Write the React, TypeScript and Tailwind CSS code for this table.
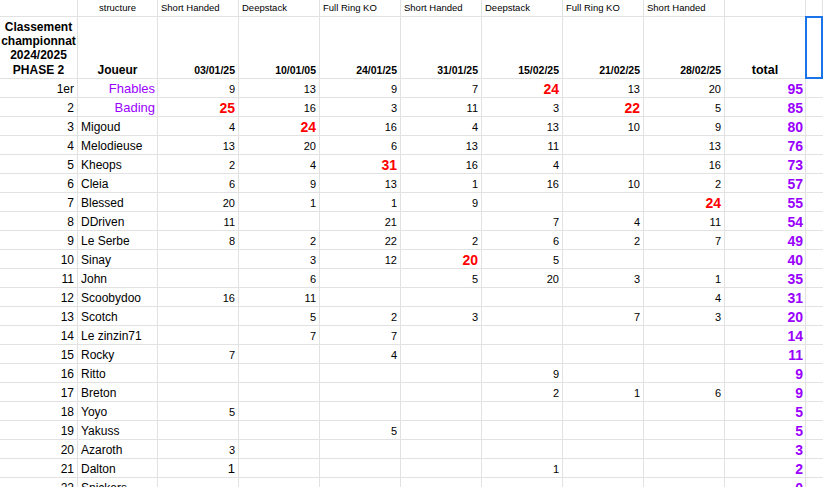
import React from 'react';

type Score = number | null | { v: number; hot: true };

interface Player {
  rank: string;
  name: string;
  lead?: boolean;
  scores: Score[];
  total: number;
}

const hot = (v: number): Score => ({ v, hot: true });

const types = ['Short Handed', 'Deepstack', 'Full Ring KO', 'Short Handed', 'Deepstack', 'Full Ring KO', 'Short Handed'];
const dates = ['03/01/25', '10/01/05', '24/01/25', '31/01/25', '15/02/25', '21/02/25', '28/02/25'];

const players: Player[] = [
  { rank: '1er', name: 'Fhables', lead: true, scores: [9, 13, 9, 7, hot(24), 13, 20], total: 95 },
  { rank: '2', name: 'Bading', lead: true, scores: [hot(25), 16, 3, 11, 3, hot(22), 5], total: 85 },
  { rank: '3', name: 'Migoud', scores: [4, hot(24), 16, 4, 13, 10, 9], total: 80 },
  { rank: '4', name: 'Melodieuse', scores: [13, 20, 6, 13, 11, null, 13], total: 76 },
  { rank: '5', name: 'Kheops', scores: [2, 4, hot(31), 16, 4, null, 16], total: 73 },
  { rank: '6', name: 'Cleia', scores: [6, 9, 13, 1, 16, 10, 2], total: 57 },
  { rank: '7', name: 'Blessed', scores: [20, 1, 1, 9, null, null, hot(24)], total: 55 },
  { rank: '8', name: 'DDriven', scores: [11, null, 21, null, 7, 4, 11], total: 54 },
  { rank: '9', name: 'Le Serbe', scores: [8, 2, 22, 2, 6, 2, 7], total: 49 },
  { rank: '10', name: 'Sinay', scores: [null, 3, 12, hot(20), 5, null, null], total: 40 },
  { rank: '11', name: 'John', scores: [null, 6, null, 5, 20, 3, 1], total: 35 },
  { rank: '12', name: 'Scoobydoo', scores: [16, 11, null, null, null, null, 4], total: 31 },
  { rank: '13', name: 'Scotch', scores: [null, 5, 2, 3, null, 7, 3], total: 20 },
  { rank: '14', name: 'Le zinzin71', scores: [null, 7, 7, null, null, null, null], total: 14 },
  { rank: '15', name: 'Rocky', scores: [7, null, 4, null, null, null, null], total: 11 },
  { rank: '16', name: 'Ritto', scores: [null, null, null, null, 9, null, null], total: 9 },
  { rank: '17', name: 'Breton', scores: [null, null, null, null, 2, 1, 6], total: 9 },
  { rank: '18', name: 'Yoyo', scores: [5, null, null, null, null, null, null], total: 5 },
  { rank: '19', name: 'Yakuss', scores: [null, null, 5, null, null, null, null], total: 5 },
  { rank: '20', name: 'Azaroth', scores: [3, null, null, null, null, null, null], total: 3 },
  { rank: '21', name: 'Dalton', scores: [1, null, null, null, 1, null, null], total: 2 },
  { rank: '22', name: 'Snickers', scores: [null, null, null, null, null, null, null], total: 0 },
  { rank: '23', name: '', scores: [null, null, null, null, null, null, null], total: 0 },
];

const cell = 'border-r border-b border-[#e2e2e2] flex items-end leading-none overflow-hidden whitespace-nowrap';

function ScoreCell({ s, big }: { s: Score; big?: boolean }) {
  if (s === null) return <div className={`${cell} h-[19px]`} />;
  if (typeof s === 'number') {
    return (
      <div className={`${cell} h-[19px] justify-end pr-[3px] pb-[2px] ${big ? 'text-[13px]' : 'text-[11px]'} text-black`}>
        {s}
      </div>
    );
  }
  return (
    <div className={`${cell} h-[19px] justify-end pr-[3px] pb-[1px] text-[14px] font-bold text-[#ff0000]`}>
      {s.v}
    </div>
  );
}

export default function App() {
  return (
    <div className="h-[487px] w-[823px] overflow-hidden bg-white font-['Liberation_Sans',Arial,sans-serif] text-black">
      <div className="grid grid-cols-[78px_80px_repeat(8,81px)_1fr]">
        {/* row 1: tournament structure */}
        <div className={`${cell} h-[17px]`} />
        <div className={`${cell} h-[17px] justify-center pb-[4px] text-[9.5px]`}>structure</div>
        {types.map((t, i) => (
          <div key={i} className={`${cell} h-[17px] pl-[3px] pb-[4px] text-[9.5px]`}>
            {t}
          </div>
        ))}
        <div className={`${cell} h-[17px]`} />
        <div className={`${cell} h-[17px]`} />

        {/* row 2: titles & dates */}
        <div className={`${cell} h-[62px] justify-center pb-[1px]`}>
          <div className="w-full text-center text-[12px] font-bold leading-[14.3px] whitespace-normal">
            Classement
            <br />
            championnat
            <br />
            2024/2025
            <br />
            PHASE 2
          </div>
        </div>
        <div className={`${cell} h-[62px] justify-center pb-[2px] text-[12px] font-bold`}>Joueur</div>
        {dates.map((d, i) => (
          <div key={i} className={`${cell} h-[62px] justify-end pr-[3px] pb-[3px] text-[10.5px] font-bold`}>
            {d}
          </div>
        ))}
        <div className={`${cell} h-[62px] justify-center pb-[2px] text-[12.5px] font-bold`}>total</div>
        <div className="relative h-[62px] border-b border-[#e2e2e2]">
          <div className="absolute -left-px -top-px right-0 bottom-[-1px] border-2 border-[#1a73e8]" />
        </div>

        {/* players */}
        {players.map((p) => (
          <React.Fragment key={p.rank}>
            <div className={`${cell} h-[19px] justify-end pr-[3px] pb-[2px] text-[12px]`}>{p.rank}</div>
            {p.lead ? (
              <div className={`${cell} h-[19px] justify-end pr-[2px] pb-[2px] text-[13px] text-[#9900ff]`}>{p.name}</div>
            ) : (
              <div className={`${cell} h-[19px] pl-[3px] pb-[2px] text-[12px]`}>{p.name}</div>
            )}
            {p.scores.map((s, i) => (
              <ScoreCell key={i} s={s} big={p.name === 'Dalton' && i === 0} />
            ))}
            <div className={`${cell} h-[19px] justify-end pr-[2px] pb-[1px] text-[14px] font-bold text-[#9900ff]`}>
              {p.name ? p.total : ''}
            </div>
            <div className={`${cell} h-[19px] border-r-0`} />
          </React.Fragment>
        ))}
      </div>
    </div>
  );
}
